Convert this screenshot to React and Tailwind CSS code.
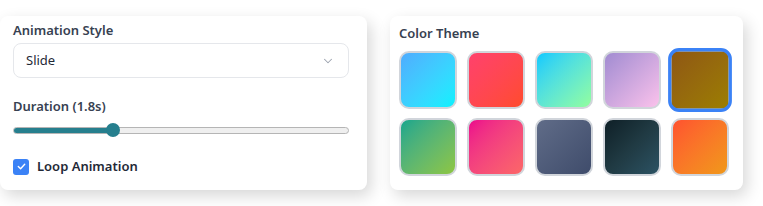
import React from "react";

const swatches = [
  { c: "bg-gradient-to-br from-[#4facfe] to-[#00f2fe]" },
  { c: "bg-gradient-to-br from-[#ff416c] to-[#ff4b2b]" },
  { c: "bg-gradient-to-br from-[#00c9ff] to-[#92fe9d]" },
  { c: "bg-gradient-to-br from-[#a18cd1] to-[#fbc2eb]" },
  { c: "bg-gradient-to-br from-[#8f5713] to-[#9c7e00]", sel: true },
  { c: "bg-gradient-to-br from-[#0fa68d] to-[#8dc63f]" },
  { c: "bg-gradient-to-br from-[#ec008c] to-[#fc6767]" },
  { c: "bg-gradient-to-br from-[#606c88] to-[#3f4c6b]" },
  { c: "bg-gradient-to-br from-[#0f2027] via-[#203a43] to-[#2c5364]" },
  { c: "bg-gradient-to-br from-[#ff512f] to-[#f09819]" },
];

export default function App() {
  return (
    <div
      className="bg-white w-[763px] h-[206px] flex items-start pt-4 gap-[23px]"
      style={{ fontFamily: '"Noto Sans", "Open Sans", sans-serif' }}
    >
      <div className="w-[367px] h-[174px] bg-white rounded-lg shadow-[4px_6px_16px_rgba(0,0,0,0.16)] pl-[13px] pr-[18px] pt-[3px] flex flex-col">
        <div className="text-[13px] font-semibold text-[#374151] leading-5 h-5 mt-[1px]">Animation Style</div>
        <div className="mt-[3px] h-[35px] w-[336px] rounded-lg border border-[#e5e7eb] flex items-center justify-between pl-3 pr-[13px]">
          <span className="text-[13px] text-[#1f2937]">Slide</span>
          <svg width="14" height="14" viewBox="0 0 24 24" fill="none" stroke="#9ca3af" strokeWidth="1.8" strokeLinecap="round" strokeLinejoin="round">
            <path d="M6 9l6 6 6-6" />
          </svg>
        </div>
        <div className="text-[13px] font-semibold text-[#374151] leading-5 h-5 mt-[18px]">Duration (1.8s)</div>
        <div className="relative mt-[7px] h-[14px] w-[336px] flex items-center">
          <div className="w-full h-[7px] rounded-full bg-[#efefef] border border-[#b5b5b5] overflow-hidden">
            <div className="h-full w-[100px] bg-[#267f8e]" />
          </div>
          <div className="absolute left-[93px] top-0 w-[14px] h-[14px] rounded-full bg-[#267f8e]" />
        </div>
        <div className="mt-[20px] flex items-center gap-2">
          <div className="w-4 h-4 rounded-[3px] bg-[#3b82f6] flex items-center justify-center">
            <svg width="11" height="11" viewBox="0 0 24 24" fill="none" stroke="white" strokeWidth="3" strokeLinecap="round" strokeLinejoin="round">
              <path d="M5 12l5 5 9-10" />
            </svg>
          </div>
          <span className="text-[13px] font-semibold text-[#1f2937]">Loop Animation</span>
        </div>
      </div>
      <div className="w-[353px] h-[174px] bg-white rounded-lg shadow-[4px_6px_16px_rgba(0,0,0,0.16)] pl-[9px] pt-[7px]">
        <div className="text-[13px] font-semibold text-[#374151] leading-5 h-5">Color Theme</div>
        <div className="mt-[8px] grid grid-cols-[repeat(5,58px)] gap-[10px] gap-y-[9px]">
          {swatches.map((s, i) => (
            <div
              key={i}
              className={
                s.sel
                  ? "w-[58px] h-[58px] rounded-[10px] border-[3px] border-[#3b82f6] scale-110 " + s.c
                  : "w-[58px] h-[58px] rounded-[10px] border-2 border-[#d1d5db] " + s.c
              }
            />
          ))}
        </div>
      </div>
    </div>
  );
}
